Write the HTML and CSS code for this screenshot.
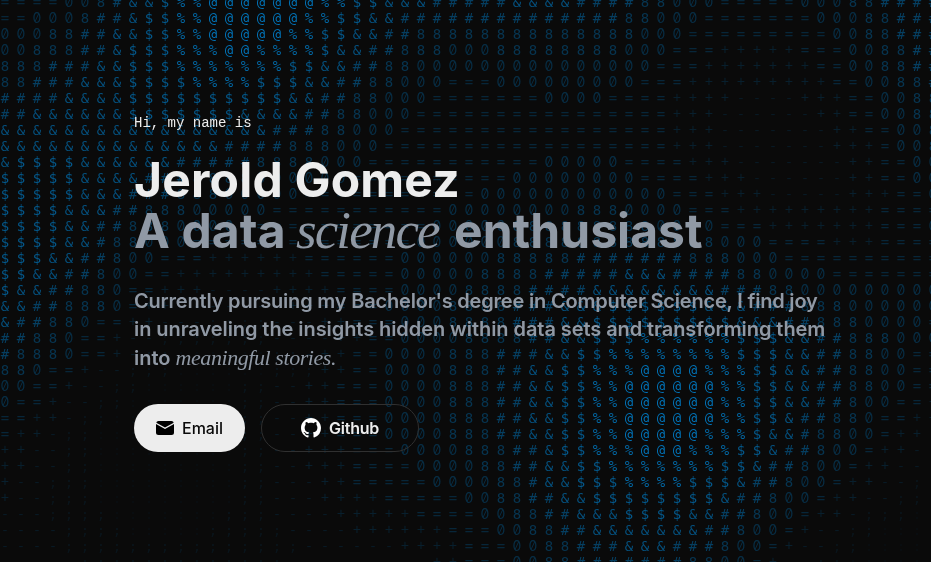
FILE: index.html
```html
<!DOCTYPE html>
<html lang="en">
<head>
<meta charset="utf-8">
<title>Jerold Gomez</title>
<link rel="stylesheet" href="styles.css">
</head>
<body>
<div class="backdrop" id="backdrop" aria-hidden="true"></div>
<main class="hero">
  <p class="greeting">Hi, my name is</p>
  <h1 class="title"><span class="name">Jerold Gomez</span><span class="role"><span class="role-a">A data</span> <em class="role-b">science</em> <span class="role-c">enthusiast</span></span></h1>
  <p class="bio"><span class="line line-1">Currently pursuing my Bachelor's degree in Computer Science, I find joy</span> <span class="line line-2">in unraveling the insights hidden within data sets and transforming them</span> <span class="line line-3">into <em>meaningful stories.</em></span></p>
  <div class="actions">
    <a class="button solid"><svg class="mail" viewBox="0 0 18 14"><path d="M2.500 0h13Q17.400 0 17.700 1.700L9 6.400.300 1.700Q.600 0 2.500 0Z"/><path d="M0 3.100 9 8l9-4.900V11.500Q18 14 15.500 14h-13Q0 14 0 11.500Z"/></svg><span>Email</span></a>
    <a class="button ghost"><svg class="mark" viewBox="0 0 16 16"><path d="M8 0C3.580 0 0 3.580 0 8c0 3.540 2.290 6.530 5.470 7.590.4.070.55-.17.55-.38 0-.19-.01-.82-.01-1.490-2.010.37-2.530-.49-2.690-.94-.09-.23-.48-.94-.82-1.130-.28-.15-.68-.52-.01-.53.63-.01 1.080.58 1.230.82.72 1.210 1.870.87 2.330.66.07-.52.28-.87.51-1.070-1.780-.2-3.640-.89-3.640-3.950 0-.87.31-1.590.82-2.150-.08-.2-.36-1.020.08-2.120 0 0 .67-.21 2.200.82.64-.18 1.320-.27 2-.27s1.360.09 2 .27c1.530-1.040 2.200-.82 2.200-.82.44 1.100.16 1.920.08 2.120.51.56.82 1.270.82 2.150 0 3.070-1.870 3.750-3.650 3.950.29.25.54.73.54 1.480 0 1.070-.01 1.930-.01 2.200 0 .21.15.46.55.38A8.010 8.010 0 0 0 16 8c0-4.420-3.580-8-8-8Z"/></svg><span>Github</span></a>
  </div>
</main>
<script src="script.js"></script>
</body>
</html>
```
FILE: styles.css
```css
* { box-sizing: border-box; }
body {
  margin: 0;
  height: 562px;
  overflow: hidden;
  background: #0a0a0a;
  color: #ededed;
  font-family: Inter, "Liberation Sans", sans-serif;
}
.backdrop {
  position: absolute;
  top: -6px;
  left: -3px;
  width: 944px;
  height: 576px;
  font: 14px/16px "DejaVu Sans Mono", monospace;
  color: #007cc6;
  will-change: transform;
}
.row { display: grid; grid-template-columns: repeat(59, 16px); height: 16px; text-align: center; }
.v1 { opacity: .04; }
.v2 { opacity: .09; }
.v3 { opacity: .14; }
.v4 { opacity: .19; font-family: "Liberation Mono", monospace; }
.v5 { opacity: .25; }
.v6 { opacity: .31; font-family: Inter, sans-serif; font-feature-settings: "zero"; }
.v7 { opacity: .37; }
.v8 { opacity: .46; }
.v9 { opacity: .6; }
.v10 { opacity: .68; }
.v11 { opacity: .8; }
.v12 { opacity: .9; }
.hero { position: relative; padding: 113px 0 0 134px; will-change: transform; }
.greeting {
  margin: 0;
  font: 14px/20px "Liberation Mono", monospace;
}
.title {
  margin: 21px 0 0;
  font-size: 48px;
  line-height: 51px;
  font-weight: 700;
}
.name, .role { display: block; height: 51px; white-space: nowrap; }
.name { letter-spacing: .2px; }
.role { display: flex; color: #9099a5; }
.role-a { width: 162px; letter-spacing: .1px; }
.role-b { width: 158px; font: italic 400 53px/51px "Liberation Serif", serif; letter-spacing: -1.9px; }
.role-c { letter-spacing: .05px; }
.bio {
  margin: 31px 0 0;
  color: #9099a5;
  font-size: 20px;
  line-height: 28.4px;
  font-weight: 600;
}
.line { display: block; height: 28.4px; white-space: nowrap; }
.line-1 { letter-spacing: -.19px; }
.line-2 { letter-spacing: -.07px; }
.line em { font: italic 400 22px/28px "Liberation Serif", serif; letter-spacing: -.43px; }
.actions { display: flex; gap: 16px; margin-top: 31.8px; }
.button {
  display: flex;
  align-items: center;
  justify-content: center;
  gap: 8px;
  height: 48px;
  border-radius: 24px;
  font-size: 16px;
  font-weight: 500;
}
.solid { width: 111px; background: #ededed; color: #0a0a0a; }
.ghost { width: 158px; border: 1px solid #303030; font-weight: 600; letter-spacing: -.2px; }
.mail { width: 18px; height: 14px; }
.mark { width: 20px; height: 20px; fill: #fff; }
```
FILE: script.js
```js
const rows = [
  "====008#&&$%%@@@@@@@%%$$&&&#####&&&&####88000=====00088####",
  "==0008##&$$%%@@@@@@%%$$&&##############88000=======00088###",
  "00088##&&$$%%@@@@@%%$$&&##88888888888888000=========0088###",
  "00888##&$$$%%%@@%%%%$&&##88800088888888000===+++++===0088##",
  "888###&&$$$%%%%%%%$$&&##88000000000000000===+++++++==0088##",
  "88###&&&$$$$%%%%$$$&&##88000===000000000===+++++++++==0088#",
  "####&&&&$$$$$$$$$$&&##88000=======0000====++++----+++==0088",
  "##&&&&&&$$$$$$$&&&&##88000================+++------++==0088",
  "&&&&&&&&&&&&&&&&&###88000=================+++-------++==008",
  "&&&&&&&&&&&&&&####888000==================+++-------+++=008",
  "&$$$$&&&&&&#####8888000===========00000====+++-------++==00",
  "$$$$$&&&&###8888000000==========00000000====+++------++==00",
  "$$$$$&&&###88800000===========000000000000===+++-----+++==0",
  "$$$$&&&##88800000===========000000008880000===+++++++++====",
  "$$$$&&##8880000============000008888888880000===+++++++===0",
  "$$$$&&#88000==============0000008888888888888000====+++====",
  "$$$&&##800===++++++======00000088888#######888000==========",
  "$$&&##800==+++++++++=====000008888#####&&&####880000=======",
  "$&&##880==+++----++++====00008888####&&&&&&&&###88000000000",
  "&&##8880=++-------+++===00008888###&&&$$$$$$&&&###888000000",
  "&##880==++---;;;;---++===0008888###&&$$$$$$$$$&&&##8880000=",
  "##880==+--;;;;;;;----++==00008888##&&$$$%%%%%%$$$&&##888000",
  "#8880==+-;;::::::;;-++==0000888###&&$$%%%%%%%%$$$&&##8800==",
  "880==+--;;;::::::;;;++==0000888##&&$$%%%@@@@%%%$$&&##8800==",
  "00==+--;;::::::;;--++===0000888##&&$$%%@@@@@@%%$$&&##8800==",
  "0==+--;;:::::::;;--++===0000888##&&$$%%@@@@@@%%$$&&##800==+",
  "==++-;;::::::::;;--++===0000888##&&$$%%@@@@@@%%$$&##880==++",
  "=++-;;:::::::::;;--++===0000888##&&$$%%@@@@@%%%$&&#8800=++-",
  "++--;;:::::::::;;--+++===0000888##&$$%%%@@@%%%$$&##800=++--",
  "++--;;:::::::::;;--+++====000088##&&$$%%%%%%%$$&##800=++--;",
  "+--;;;:::::::::;;---++=====000088#&&$$$%%%%$$$&##800=++--;:",
  "+--;;;:::::::::;;---++++=====0088##&&$$$$$$$$&##800=++--;;;",
  "---;;;;:::::::;;;----+++++====0088##&&&$$$$&&##800=++-;;;::",
  "----;;;;:::::;;;;;----++++++===0088##&&&&&&&##800=+--;;::::",
  "----;;;;;;;;;;;;;;;------++++===0088###&&&###800=+--;;:::::",
  "-----;;;;;;;;;;;;;---------++===0088#######8800=+--;;::::::"
];
const ramp = ":;-+=08#&$%@";
const backdrop = document.getElementById("backdrop");
for (const text of rows) {
  const row = document.createElement("div");
  row.className = "row";
  for (const glyph of text) {
    const cell = document.createElement("span");
    cell.className = "v" + (ramp.indexOf(glyph) + 1);
    cell.textContent = glyph;
    row.append(cell);
  }
  backdrop.append(row);
}
```
